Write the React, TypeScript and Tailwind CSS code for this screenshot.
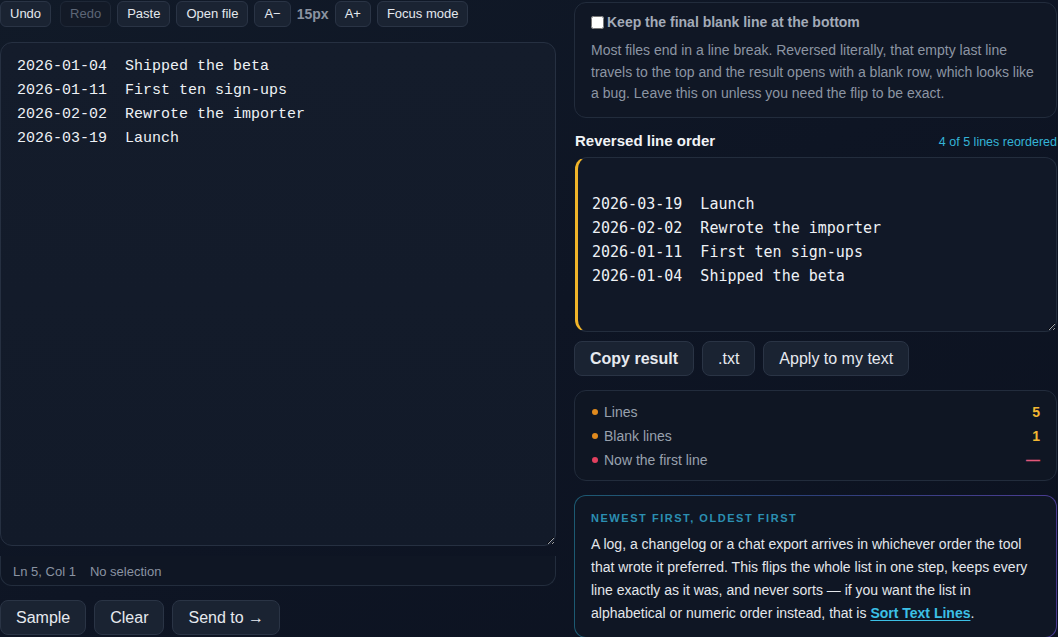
import { useState } from "react";

const input = [
  "2026-01-04  Shipped the beta",
  "2026-01-11  First ten sign-ups",
  "2026-02-02  Rewrote the importer",
  "2026-03-19  Launch",
].join("\n");

const reversed = "\n" + input.split("\n").reverse().join("\n");

const stats = [
  { label: "Lines", value: "5", dot: "bg-[#e08a1e]", tone: "text-[#f2b632]" },
  { label: "Blank lines", value: "1", dot: "bg-[#e08a1e]", tone: "text-[#f2b632]" },
  { label: "Now the first line", value: "—", dot: "bg-[#e2405f]", tone: "text-[#e2587a]" },
];

const toolBtn =
  "h-[26px] rounded-md border border-[#2a3445] bg-[#1a2332] px-[9px] text-[13px] text-[#e4e8ee]";
const bigBtn =
  "h-[35px] rounded-lg border border-[#2a3445] bg-[#1a2332] px-[15px] text-[16px] text-[#e6e9ef]";

export default function App() {
  const [keepBlank, setKeepBlank] = useState(false);

  return (
    <div className="min-h-[637px] w-[1058px] overflow-hidden bg-gradient-to-br from-[#111a28] via-[#0e1524] to-[#0c1220] font-['Liberation_Sans',Arial,sans-serif] text-[#e5e7eb]">
      <div className="grid grid-cols-[556px_483px] gap-x-[18px]">
        {/* editor column */}
        <div className="flex flex-col">
          <div className="mt-px flex items-center gap-[6px]">
            <button className={toolBtn}>Undo</button>
            <button className="ml-[3px] h-[26px] rounded-md border border-[#1f2837] bg-[#131a27] px-[9px] text-[13px] text-[#5d6676]">
              Redo
            </button>
            <button className={toolBtn}>Paste</button>
            <button className={toolBtn}>Open file</button>
            <button className={toolBtn}>A−</button>
            <span className="text-[14px] font-bold text-[#8b93a1]">15px</span>
            <button className={toolBtn}>A+</button>
            <button className={toolBtn}>Focus mode</button>
          </div>

          <textarea
            defaultValue={input}
            spellCheck={false}
            className="mt-[15px] h-[504px] w-[556px] rounded-xl border border-[#263041] bg-gradient-to-b from-[#141c2b] to-[#121a29] px-4 py-[12px] font-['Liberation_Mono',monospace] text-[15px] leading-6 text-[#eef1f5] outline-none"
          />

          <div className="mt-[10px] flex h-[30px] items-center gap-[14px] rounded-b-xl border-x border-b border-[#232d3d] bg-[#0f1624] px-3 pt-[2px] text-[13px] text-[#8a93a2]">
            <span>Ln 5, Col 1</span>
            <span>No selection</span>
          </div>

          <div className="mt-[14px] flex gap-2">
            <button className={bigBtn}>Sample</button>
            <button className={bigBtn}>Clear</button>
            <button className={bigBtn}>Send to →</button>
          </div>
        </div>

        {/* result column */}
        <div className="flex flex-col">
          <div className="mt-[2px] rounded-xl border border-[#222c3c] bg-[#101725] px-4 pb-[12px] pt-[9px]">
            <label className="flex items-center gap-[3px] text-[14px] font-bold text-[#a3abb8]">
              <input
                type="checkbox"
                checked={keepBlank}
                onChange={(e) => setKeepBlank(e.target.checked)}
                className="m-0 h-[13px] w-[13px]"
              />
              Keep the final blank line at the bottom
            </label>
            <p className="mt-[7px] text-[14px] leading-[21.5px] text-[#8c95a3]">
              Most files end in a line break. Reversed literally, that empty last line travels to
              the top and the result opens with a blank row, which looks like a bug. Leave this on
              unless you need the flip to be exact.
            </p>
          </div>

          <div className="mt-[12px] flex items-baseline justify-between pl-px">
            <h2 className="text-[15px] font-bold text-[#f1f3f6]">Reversed line order</h2>
            <span className="text-[12.5px] text-[#34b3d6]">4 of 5 lines reordered</span>
          </div>

          <textarea
            readOnly
            value={reversed}
            className="mt-[5px] ml-px h-[175px] w-[482px] rounded-xl border border-l-[3px] border-[#232d3d] border-l-[#f0b429] bg-[#111827] px-[14px] py-[10px] font-['DejaVu_Sans_Mono',monospace] text-[15px] leading-6 text-[#eef1f5] outline-none"
          />

          <div className="mt-[9px] flex gap-2">
            <button className={bigBtn + " font-bold"}>Copy result</button>
            <button className={bigBtn}>.txt</button>
            <button className={bigBtn}>Apply to my text</button>
          </div>

          <ul className="mt-[14px] flex flex-col gap-[6px] rounded-xl border border-[#222c3c] bg-[#0f1623] pb-[11px] pl-[17px] pr-[16px] pt-[12px]">
            {stats.map((s) => (
              <li key={s.label} className="flex h-[18px] items-center text-[14px]">
                <span className={"mr-[6px] h-[6px] w-[6px] rounded-full " + s.dot} />
                <span className="text-[#98a1ae]">{s.label}</span>
                <span className={"ml-auto font-bold " + s.tone}>{s.value}</span>
              </li>
            ))}
          </ul>

          <div className="mt-[14px] rounded-xl bg-gradient-to-r from-[#1c5a72] via-[#2d3f7a] to-[#4a3c92] p-px">
            <div className="rounded-[11px] bg-[#0f1624] px-4 pb-[12px] pt-[14px]">
              <div className="text-[11px] font-bold tracking-[0.14em] text-[#2b8fb2]">
                NEWEST FIRST, OLDEST FIRST
              </div>
              <p className="mt-[6px] text-[14px] leading-[23px] text-[#e3e6eb]">
                A log, a changelog or a chat export arrives in whichever order the tool that wrote
                it preferred. This flips the whole list in one step, keeps every line exactly as it
                was, and never sorts — if you want the list in alphabetical or numeric order
                instead, that is{" "}
                <a href="#" className="font-bold text-[#3cc0e6] underline underline-offset-2">
                  Sort Text Lines
                </a>
                .
              </p>
            </div>
          </div>
        </div>
      </div>
    </div>
  );
}
